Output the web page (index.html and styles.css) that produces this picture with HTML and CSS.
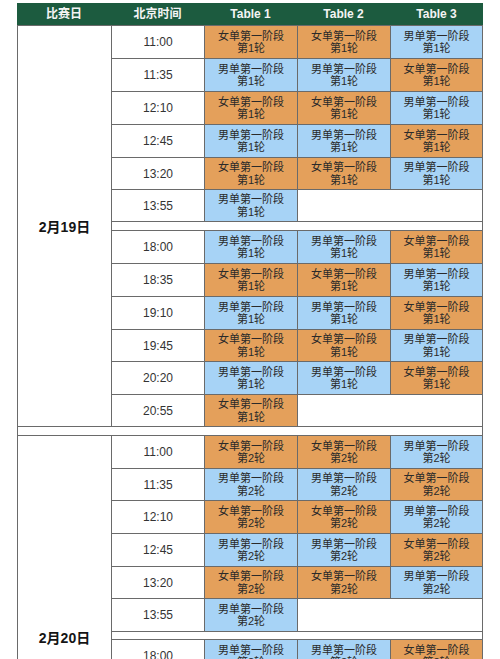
FILE: index.html
```html
<!DOCTYPE html>
<html lang="zh-CN">
<head>
<meta charset="utf-8">
<title>赛程表</title>
<link rel="stylesheet" href="styles.css">
</head>
<body>
<div class="sheet">
  <div class="head">
    <div>比赛日</div>
    <div>北京时间</div>
    <div>Table 1</div>
    <div>Table 2</div>
    <div>Table 3</div>
  </div>
  <div class="grid">
    <div class="date">2月19日</div>
    <div class="time">11:00</div><div class="slot w">女单第一阶段<br>第1轮</div><div class="slot w">女单第一阶段<br>第1轮</div><div class="slot m">男单第一阶段<br>第1轮</div>
    <div class="time">11:35</div><div class="slot m">男单第一阶段<br>第1轮</div><div class="slot m">男单第一阶段<br>第1轮</div><div class="slot w">女单第一阶段<br>第1轮</div>
    <div class="time">12:10</div><div class="slot w">女单第一阶段<br>第1轮</div><div class="slot w">女单第一阶段<br>第1轮</div><div class="slot m">男单第一阶段<br>第1轮</div>
    <div class="time">12:45</div><div class="slot m">男单第一阶段<br>第1轮</div><div class="slot m">男单第一阶段<br>第1轮</div><div class="slot w">女单第一阶段<br>第1轮</div>
    <div class="time">13:20</div><div class="slot w">女单第一阶段<br>第1轮</div><div class="slot w">女单第一阶段<br>第1轮</div><div class="slot m">男单第一阶段<br>第1轮</div>
    <div class="time">13:55</div><div class="slot m">男单第一阶段<br>第1轮</div><div class="empty"></div>
    <div class="split"></div>
    <div class="time">18:00</div><div class="slot m">男单第一阶段<br>第1轮</div><div class="slot m">男单第一阶段<br>第1轮</div><div class="slot w">女单第一阶段<br>第1轮</div>
    <div class="time">18:35</div><div class="slot w">女单第一阶段<br>第1轮</div><div class="slot w">女单第一阶段<br>第1轮</div><div class="slot m">男单第一阶段<br>第1轮</div>
    <div class="time">19:10</div><div class="slot m">男单第一阶段<br>第1轮</div><div class="slot m">男单第一阶段<br>第1轮</div><div class="slot w">女单第一阶段<br>第1轮</div>
    <div class="time">19:45</div><div class="slot w">女单第一阶段<br>第1轮</div><div class="slot w">女单第一阶段<br>第1轮</div><div class="slot m">男单第一阶段<br>第1轮</div>
    <div class="time">20:20</div><div class="slot m">男单第一阶段<br>第1轮</div><div class="slot m">男单第一阶段<br>第1轮</div><div class="slot w">女单第一阶段<br>第1轮</div>
    <div class="time">20:55</div><div class="slot w">女单第一阶段<br>第1轮</div><div class="empty"></div>

    <div class="daygap"></div>

    <div class="date">2月20日</div>
    <div class="time">11:00</div><div class="slot w">女单第一阶段<br>第2轮</div><div class="slot w">女单第一阶段<br>第2轮</div><div class="slot m">男单第一阶段<br>第2轮</div>
    <div class="time">11:35</div><div class="slot m">男单第一阶段<br>第2轮</div><div class="slot m">男单第一阶段<br>第2轮</div><div class="slot w">女单第一阶段<br>第2轮</div>
    <div class="time">12:10</div><div class="slot w">女单第一阶段<br>第2轮</div><div class="slot w">女单第一阶段<br>第2轮</div><div class="slot m">男单第一阶段<br>第2轮</div>
    <div class="time">12:45</div><div class="slot m">男单第一阶段<br>第2轮</div><div class="slot m">男单第一阶段<br>第2轮</div><div class="slot w">女单第一阶段<br>第2轮</div>
    <div class="time">13:20</div><div class="slot w">女单第一阶段<br>第2轮</div><div class="slot w">女单第一阶段<br>第2轮</div><div class="slot m">男单第一阶段<br>第2轮</div>
    <div class="time">13:55</div><div class="slot m">男单第一阶段<br>第2轮</div><div class="empty"></div>
    <div class="split"></div>
    <div class="time">18:00</div><div class="slot m">男单第一阶段<br>第2轮</div><div class="slot m">男单第一阶段<br>第2轮</div><div class="slot w">女单第一阶段<br>第2轮</div>
  </div>
</div>
</body>
</html>
```

FILE: styles.css
```css
html, body {
  margin: 0;
  padding: 0;
  background: #ffffff;
}

body {
  font-family: "Liberation Sans", "Noto Sans CJK SC", sans-serif;
  color: #222222;
}

.sheet {
  margin: 3px 0 0 17px;
  width: 466px;
}

.head {
  display: grid;
  grid-template-columns: 94px 93px 93px 93px 93px;
  height: 22px;
  background: #1c5b3f;
  color: #f4f4f4;
  font-size: 12px;
  font-weight: bold;
  line-height: 22px;
  text-align: center;
}

.grid {
  display: grid;
  grid-template-columns: 93px 92px 92px 92px 91px;
  grid-template-rows:
    32px 32px 32px 32px 31px 31px 8px 32px 32px 32px 31px 32px 31px
    8px
    32px 31px 32px 32px 31px 32px 7px 32px 32px 32px 32px 32px 32px;
  gap: 1px;
  padding: 1px;
  background: #6a6a6a;
}

.grid > div {
  background: #ffffff;
}

.date {
  grid-row: span 13;
  display: flex;
  align-items: center;
  justify-content: center;
  font-size: 14px;
  font-weight: bold;
  color: #151515;
}

.time {
  display: flex;
  align-items: center;
  justify-content: center;
  font-size: 12px;
  color: #333333;
}

.slot {
  display: flex;
  align-items: center;
  justify-content: center;
  text-align: center;
  font-size: 11px;
  line-height: 12.5px;
  color: #2a2a2a;
}

.grid > .w {
  background: #e4a05b;
}

.grid > .m {
  background: #a7d3f6;
}

.empty {
  grid-column: span 2;
}

.split {
  grid-column: 2 / -1;
}

.daygap {
  grid-column: 1 / -1;
}
```
